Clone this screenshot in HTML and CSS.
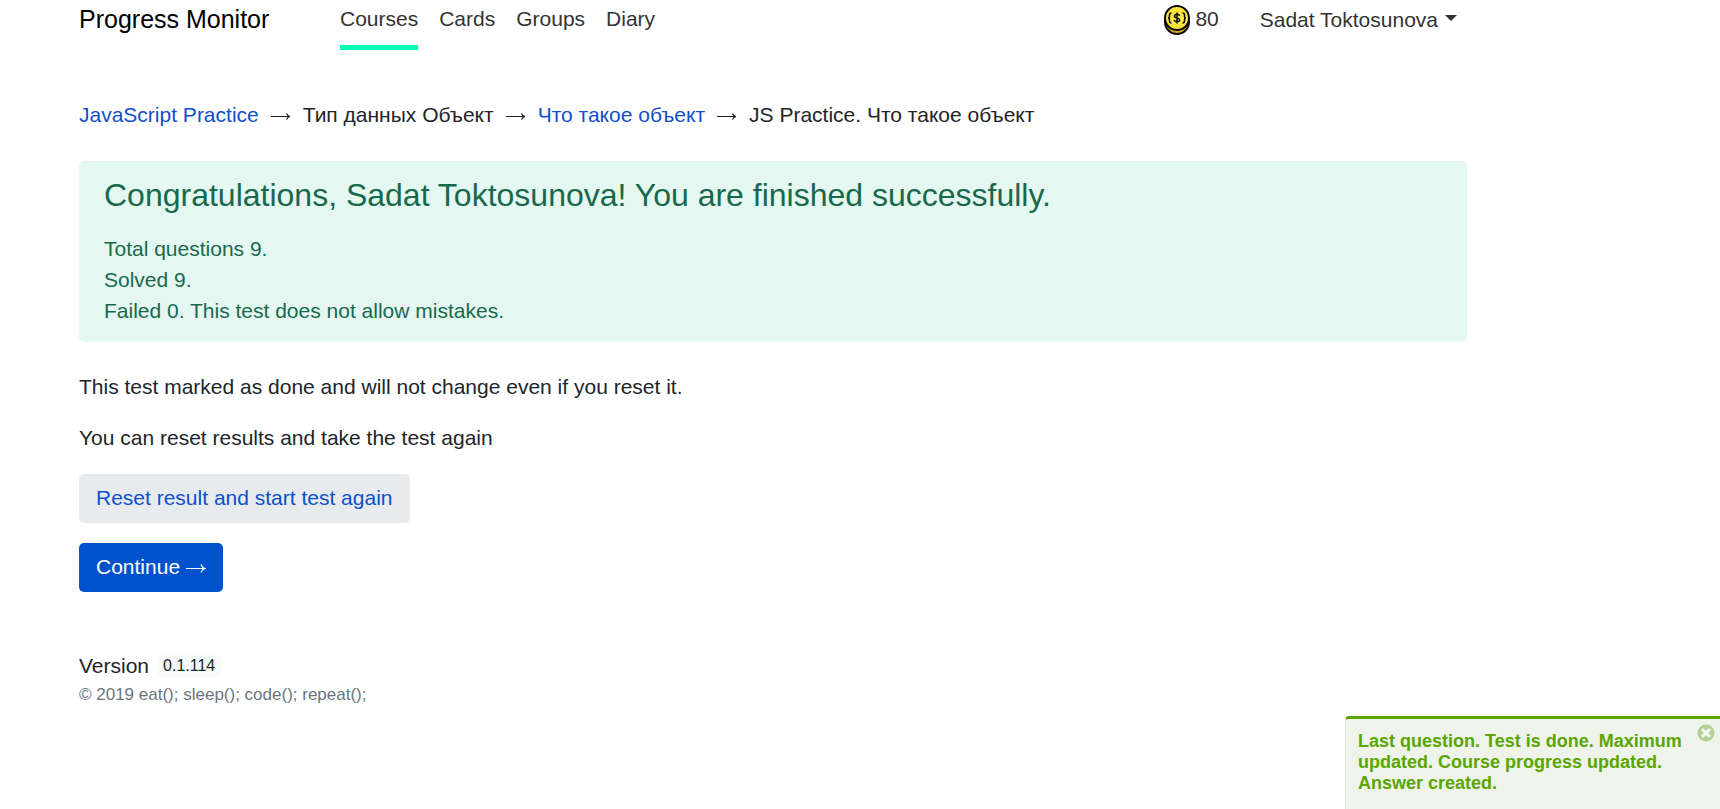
FILE: index.html
```
<!DOCTYPE html>
<html lang="en">
<head>
<meta charset="utf-8">
<title>Progress Monitor</title>
<link rel="stylesheet" href="styles.css">
</head>
<body>
<header class="navbar">
  <a class="brand" href="#">Progress Monitor</a>
  <nav class="nav">
    <a class="nav-link active" href="#">Courses</a>
    <a class="nav-link" href="#">Cards</a>
    <a class="nav-link" href="#">Groups</a>
    <a class="nav-link" href="#">Diary</a>
  </nav>
  <div class="account">
    <span class="coins">
      <svg class="coin" viewBox="0 0 26 30" aria-hidden="true">
        <circle cx="13" cy="17" r="12" fill="#d9a91c" stroke="#0b0b0b" stroke-width="2"/>
        <circle cx="13" cy="13" r="12" fill="#fce43c" stroke="#0b0b0b" stroke-width="2"/>
        <path d="M7.500 8q-2 0-2 2v1.500q0 1.500-1.500 1.500q1.500 0 1.500 1.500v1.500q0 2 2 2M18.500 8q2 0 2 2v1.500q0 1.500 1.500 1.500q-1.500 0-1.500 1.500v1.500q0 2-2 2" fill="none" stroke="#0b0b0b" stroke-width="1.500"/>
        <path d="M15.600 10.700q-.4-1.500-2.600-1.500t-2.500 1.700q0 1.500 2.500 2t2.700 2.100q-.2 1.700-2.700 1.700t-2.700-1.700M13 7.500v11" fill="none" stroke="#0b0b0b" stroke-width="1.500"/>
      </svg>
      80
    </span>
    <button class="user" type="button">Sadat Toktosunova<span class="caret"></span></button>
  </div>
</header>
<main class="content">
  <nav class="breadcrumb" aria-label="Breadcrumb">
    <a href="#">JavaScript Practice</a>
    <svg class="arrow" viewBox="0 0 20 12" aria-hidden="true"><path d="M0 7.500h19M15.500 4.500q1 2.500 3.500 3q-2.500.5-3.500 3"/></svg>
    <span>Тип данных Объект</span>
    <svg class="arrow" viewBox="0 0 20 12" aria-hidden="true"><path d="M0 7.500h19M15.500 4.500q1 2.500 3.500 3q-2.500.5-3.500 3"/></svg>
    <a href="#">Что такое объект</a>
    <svg class="arrow" viewBox="0 0 20 12" aria-hidden="true"><path d="M0 7.500h19M15.500 4.500q1 2.500 3.500 3q-2.500.5-3.500 3"/></svg>
    <span>JS Practice. Что такое объект</span>
  </nav>
  <section class="alert">
    <h1 class="alert-title">Congratulations, Sadat Toktosunova! You are finished successfully.</h1>
    <p>Total questions 9.</p>
    <p>Solved 9.</p>
    <p>Failed 0. This test does not allow mistakes.</p>
  </section>
  <p class="note">This test marked as done and will not change even if you reset it.</p>
  <p class="note">You can reset results and take the test again</p>
  <div class="actions">
    <button class="btn btn-light" type="button">Reset result and start test again</button>
    <a class="btn btn-primary" href="#">Continue <svg class="arrow" viewBox="0 0 20 12" aria-hidden="true"><path d="M0 7.500h19M15 3.500q1 3.200 4 4q-3 .8-4 4"/></svg></a>
  </div>
</main>
<footer class="footer">
  <div class="version">Version <span class="badge">0.1.114</span></div>
  <small class="copyright">© 2019 eat(); sleep(); code(); repeat();</small>
</footer>
<aside class="toast" role="status">
  <p class="toast-text">Last question. Test is done. Maximum updated. Course progress updated. Answer created.</p>
  <button class="toast-close" type="button" aria-label="Close">
    <svg viewBox="0 0 18 18" aria-hidden="true"><circle cx="9" cy="9" r="8.500" fill="#b1cf97"/><path d="M5 5l8 8M13 5l-8 8" stroke="#f4faf0" stroke-width="3"/></svg>
  </button>
</aside>
</body>
</html>
```
FILE: styles.css
```
* { box-sizing: border-box; }
body {
  margin: 0;
  padding: 0 253px 0 79px;
  background: #fff;
  color: #212529;
  font: 21px/31px "Liberation Sans", Arial, sans-serif;
}
p { margin: 0; }
a { color: #0f4fcb; text-decoration: none; }
button { font: inherit; border: 0; background: none; padding: 0; cursor: pointer; }
.navbar { display: flex; align-items: flex-start; height: 50px; }
.brand { width: 261px; padding-top: 4px; font-size: 25px; color: #000; white-space: nowrap; }
.nav { display: flex; gap: 21px; height: 50px; }
.nav-link { padding-top: 3px; color: #333; }
.nav-link.active { border-bottom: 5px solid #00ffb4; }
.account { display: flex; gap: 41px; margin-left: auto; padding: 3px 10px 0 0; color: #333; }
.coins { display: flex; align-items: flex-start; gap: 5px; }
.coin { width: 26px; height: 30px; margin-top: 2px; }
.user { display: flex; align-items: center; gap: 7px; color: #333; white-space: nowrap; }
.caret { margin-bottom: 2px; border: 6px solid transparent; border-top-color: #333; border-bottom: 0; }
.breadcrumb { display: flex; align-items: center; gap: 12px; margin-top: 49px; }
.arrow { width: 20px; height: 12px; fill: none; stroke: currentColor; stroke-width: 1.2; }
.alert { margin-top: 31px; padding: 14px 25px 16px; border-radius: 5px; background: #e4f7f1; color: #18694c; }
.alert-title { margin: 0 0 18px; font-size: 32px; line-height: 40px; font-weight: 400; }
.note { margin: 29px 0 20px; }
.note + .note { margin: 20px 0 21px; }
.actions { display: flex; flex-direction: column; align-items: flex-start; gap: 20px; }
.btn { display: inline-flex; align-items: center; gap: 6px; padding: 8px 17px 10px; border-radius: 5px; }
.btn-light { background: #e7ebee; color: #0f4fcb; }
.btn-primary { background: #0052cc; color: #fff; }
.footer { margin-top: 58px; }
.version { display: flex; align-items: center; gap: 8px; }
.badge { padding: 0 6px; border-radius: 5px; background: #f8f9fb; font-size: 16px; line-height: 22px; }
.copyright { display: block; margin-top: 1px; font-size: 17px; line-height: 25px; color: #6c757d; }
.toast {
  position: fixed;
  right: 0;
  bottom: 0;
  display: flex;
  width: 375px;
  padding: 12px 5px 15px 12px;
  border-top: 3px solid #5ba500;
  border-left: 1px solid #dfe9d3;
  border-top-left-radius: 4px;
  background: #eef4e9;
}
.toast-text { flex: 1; padding-right: 12px; color: #5ba500; font-size: 18px; line-height: 21px; font-weight: 700; }
.toast-close { width: 18px; height: 18px; margin-top: -7px; }
.toast-close svg { display: block; width: 18px; height: 18px; }
```
